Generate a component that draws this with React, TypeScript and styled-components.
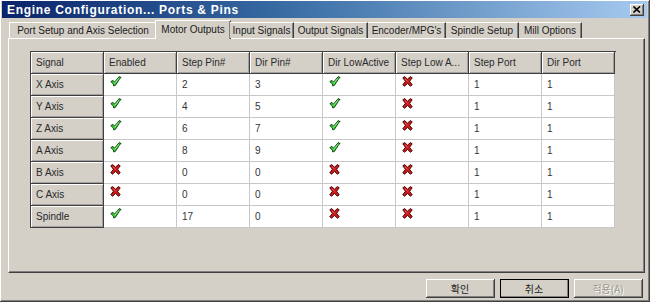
import React from "react";
import styled, { createGlobalStyle } from "styled-components";

const Global = createGlobalStyle`
  html, body { margin: 0; padding: 0; background: #d4d0c8; }
  body { font-family: "Liberation Sans", Arial, sans-serif; }
`;

const Window = styled.div`
  width: 650px;
  height: 302px;
  box-sizing: border-box;
  background: #d4d0c8;
  border-right: 1px solid #404040;
  border-bottom: 1px solid #404040;
  box-shadow: inset 1px 1px 0 #ffffff, inset -1px -1px 0 #808080;
  padding: 1px 2px 0 2px;
  display: flex;
  flex-direction: column;
  overflow: hidden;
`;

const TitleBar = styled.div`
  height: 17px;
  background: linear-gradient(to right, #0a246a 0%, #3a6ea5 45%, #a6caf0 100%);
  display: flex;
  align-items: center;
  justify-content: space-between;
  padding: 0 2px 0 5px;
`;

const Title = styled.span`
  color: #fff;
  font-weight: bold;
  font-size: 12px;
  letter-spacing: 0.7px;
`;

const CloseButton = styled.div`
  width: 14px;
  height: 12px;
  margin-right: 1px;
  background: #d4d0c8;
  box-sizing: border-box;
  border-right: 1px solid #404040;
  border-bottom: 1px solid #404040;
  box-shadow: inset 1px 1px 0 #fff, inset -1px -1px 0 #808080;
  display: flex;
  align-items: center;
  justify-content: center;
`;

const Body = styled.div`
  padding: 2px 1px 0 6px;
  display: flex;
  flex-direction: column;
`;

const TabStrip = styled.div`
  display: flex;
  align-items: flex-end;
  height: 18px;
  padding-left: 1px;
  position: relative;
  z-index: 1;
`;

const Tab = styled.div<{ $w: number; $active?: boolean }>`
  width: ${(p) => p.$w}px;
  height: ${(p) => (p.$active ? 19 : 16)}px;
  box-sizing: border-box;
  margin: ${(p) => (p.$active ? "0 -1px -1px -2px" : "0")};
  background: #d4d0c8;
  border-top: 1px solid #fff;
  border-left: ${(p) => (p.$active ? "1px solid #fff" : "none")};
  border-right: 1px solid #404040;
  box-shadow: inset -1px 0 0 #808080;
  font-size: 10px;
  color: #1a1a1a;
  display: flex;
  align-items: center;
  justify-content: center;
  padding-bottom: ${(p) => (p.$active ? 2 : 0)}px;
  white-space: nowrap;
  &:first-child {
    border-left: 1px solid #fff;
  }
`;

const Panel = styled.div`
  height: 235px;
  box-sizing: border-box;
  width: 637px;
  border-top: 1px solid #fff;
  border-left: 1px solid #fff;
  border-right: 1px solid #404040;
  border-bottom: 1px solid #404040;
  box-shadow: inset -1px -1px 0 #808080;
  padding: 12px 0 0 21px;
`;

const Grid = styled.div`
  display: grid;
  grid-template-columns: repeat(8, 73px);
  grid-auto-rows: 22px;
  width: 585px;
  border-left: 1px solid #404040;
  border-top: 1px solid #404040;
`;

const HeadCell = styled.div`
  background: #d4d0c8;
  box-sizing: border-box;
  border-right: 1px solid #404040;
  border-bottom: 1px solid #404040;
  box-shadow: inset 1px 1px 0 #fff, inset -1px -1px 0 #a0a0a0;
  font-size: 10px;
  color: #2a2a2a;
  padding-left: 5px;
  display: flex;
  align-items: center;
  white-space: nowrap;
  overflow: hidden;
`;

const Cell = styled.div`
  background: #fff;
  box-sizing: border-box;
  border-right: 1px solid #c8c8c8;
  border-bottom: 1px solid #c8c8c8;
  font-size: 10px;
  color: #333;
  padding-left: 5px;
  display: flex;
  align-items: center;
`;

const IconCell = styled(Cell)`
  align-items: flex-start;
  padding-top: 2px;
  padding-left: 6px;
`;

const Footer = styled.div`
  display: flex;
  justify-content: flex-end;
  gap: 5px;
  padding: 6px 3px 0 0;
`;

const Button = styled.div<{ $default?: boolean; $disabled?: boolean }>`
  width: 69px;
  height: 19px;
  box-sizing: border-box;
  background: #d4d0c8;
  border-right: 1px solid #404040;
  border-bottom: 1px solid #404040;
  box-shadow: inset 1px 1px 0 #fff, inset -1px -1px 0 #808080;
  outline: ${(p) => (p.$default ? "1px solid #000" : "none")};
  outline-offset: ${(p) => (p.$default ? "-1px" : "0")};
  font-family: "Noto Sans CJK KR", "Liberation Sans", sans-serif;
  font-size: 10px;
  color: ${(p) => (p.$disabled ? "#9a968e" : "#222")};
  text-shadow: ${(p) => (p.$disabled ? "1px 1px 0 #fff" : "none")};
  display: flex;
  align-items: center;
  justify-content: center;
`;

function Check() {
  return (
    <svg width="12" height="11" viewBox="0 0 12 11">
      <path
        d="M0.8 5.6 L3 4.4 L4.6 6.2 L9.2 0.6 L11.2 1.6 L9.6 2.4 L9.2 3.6 L5.2 9.6 L3.6 9.8 L3.4 8 Z"
        fill="#33cc33"
        stroke="#0f4a0f"
        strokeWidth="1"
        strokeLinejoin="round"
      />
      <path d="M4.6 7.4 L9 2.2" stroke="#a8f5a8" strokeWidth="0.9" />
    </svg>
  );
}

function Cross() {
  return (
    <svg width="11" height="11" viewBox="0 0 11 11">
      <path
        d="M0.8 1.8 L2.6 0.6 L5.5 3.2 L8.4 0.6 L10.2 1.8 L7.6 5.3 L10.2 8.8 L8.4 10.2 L5.5 7.4 L2.6 10.2 L0.8 8.8 L3.4 5.3 Z"
        fill="#cc1c1c"
        stroke="#4a0606"
        strokeWidth="1"
        strokeLinejoin="round"
      />
      <path d="M3 3 L5.5 5" stroke="#ff6a6a" strokeWidth="0.8" />
    </svg>
  );
}

const tabs: [string, number, boolean?][] = [
  ["Port Setup and Axis Selection", 148],
  ["Motor Outputs", 76, true],
  ["Input Signals", 64],
  ["Output Signals", 74],
  ["Encoder/MPG's", 78],
  ["Spindle Setup", 73],
  ["Mill Options", 63],
];

const headers = [
  "Signal",
  "Enabled",
  "Step Pin#",
  "Dir Pin#",
  "Dir LowActive",
  "Step Low A...",
  "Step Port",
  "Dir Port",
];

type Row = [string, boolean, number, number, boolean, boolean, number, number];

const rows: Row[] = [
  ["X Axis", true, 2, 3, true, false, 1, 1],
  ["Y Axis", true, 4, 5, true, false, 1, 1],
  ["Z Axis", true, 6, 7, true, false, 1, 1],
  ["A Axis", true, 8, 9, true, false, 1, 1],
  ["B Axis", false, 0, 0, false, false, 1, 1],
  ["C Axis", false, 0, 0, false, false, 1, 1],
  ["Spindle", true, 17, 0, false, false, 1, 1],
];

const Flag = ({ on }: { on: boolean }) => (
  <IconCell>{on ? <Check /> : <Cross />}</IconCell>
);

export default function App() {
  return (
    <>
      <Global />
      <Window>
        <TitleBar>
          <Title>Engine Configuration... Ports &amp; Pins</Title>
          <CloseButton>
            <svg width="8" height="7" viewBox="0 0 8 7">
              <path d="M0.5 0.5 L7 6.5 M7 0.5 L0.5 6.5" stroke="#000" strokeWidth="1.6" />
            </svg>
          </CloseButton>
        </TitleBar>
        <Body>
          <TabStrip>
            {tabs.map(([label, w, active]) => (
              <Tab key={label} $w={w} $active={active}>
                {label}
              </Tab>
            ))}
          </TabStrip>
          <Panel>
            <Grid>
              {headers.map((h) => (
                <HeadCell key={h}>{h}</HeadCell>
              ))}
              {rows.map((r) => (
                <React.Fragment key={r[0]}>
                  <HeadCell>{r[0]}</HeadCell>
                  <Flag on={r[1]} />
                  <Cell>{r[2]}</Cell>
                  <Cell>{r[3]}</Cell>
                  <Flag on={r[4]} />
                  <Flag on={r[5]} />
                  <Cell>{r[6]}</Cell>
                  <Cell>{r[7]}</Cell>
                </React.Fragment>
              ))}
            </Grid>
          </Panel>
          <Footer>
            <Button>확인</Button>
            <Button $default>취소</Button>
            <Button $disabled>적용(A)</Button>
          </Footer>
        </Body>
      </Window>
    </>
  );
}
